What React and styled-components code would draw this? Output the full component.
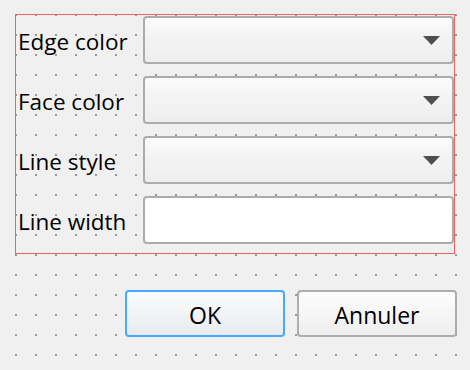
import React from "react";
import styled, { createGlobalStyle } from "styled-components";

const Global = createGlobalStyle`
  html, body { margin: 0; padding: 0; background: #f0f0f0; }
  body { font-family: "Open Sans", "Noto Sans", sans-serif; }
  * { box-sizing: border-box; }
`;

const Canvas = styled.div`
  width: 470px;
  height: 370px;
  padding: 14px 13px 0 15px;
  background-color: #f0f0f0;
  background-image: conic-gradient(at 2px 2px, transparent 270deg, #989898 270deg);
  background-size: 20px 20px;
  background-position: 15px 14px;
  display: flex;
  flex-direction: column;
`;

const FormBox = styled.div`
  width: 440px;
  height: 240px;
  border: 1px solid #f06262;
  padding: 1px 0 9px 0;
  display: grid;
  grid-template-columns: 127px 1fr;
  grid-auto-rows: 48px;
  row-gap: 12px;
`;

const Label = styled.div`
  display: flex;
  align-items: center;
  padding-left: 2px;
  padding-top: 2px;
  font-size: 22.5px;
  color: #000;
  white-space: nowrap;
`;

const Field = styled.div`
  border: 2px solid #acacac;
  border-radius: 4px;
  display: flex;
  align-items: center;
  justify-content: flex-end;
  padding-right: 12px;
  background: ${(p) =>
    p.$combo ? "linear-gradient(#fcfcfc, #f4f4f4 40%, #eeeeee)" : "#ffffff"};
`;

const Arrow = styled.svg`
  width: 17px;
  height: 9px;
  display: block;
  margin-top: 1px;
`;

const ButtonRow = styled.div`
  margin-top: 36px;
  display: flex;
  justify-content: flex-end;
  gap: 12px;
`;

const Button = styled.div`
  width: 160px;
  height: 47px;
  border: 2px solid ${(p) => (p.$focused ? "#47a9ff" : "#adadad")};
  border-radius: 4px;
  background: ${(p) =>
    p.$focused
      ? "linear-gradient(#fbfcfd, #e7ebef)"
      : "linear-gradient(#fdfdfd, #eeeeee)"};
  display: flex;
  align-items: center;
  justify-content: center;
  padding-top: 3px;
  font-size: 23px;
  color: #000;
`;

const ComboArrow = () => (
  <Arrow viewBox="0 0 17 9">
    <polygon points="0,0 17,0 8.5,9" fill="#4f4f4f" />
  </Arrow>
);

export default function App() {
  const rows = [
    { label: "Edge color", combo: true },
    { label: "Face color", combo: true },
    { label: "Line style", combo: true },
    { label: "Line width", combo: false },
  ];
  return (
    <>
      <Global />
      <Canvas>
        <FormBox>
          {rows.map((r) => (
            <React.Fragment key={r.label}>
              <Label>{r.label}</Label>
              <Field $combo={r.combo}>{r.combo && <ComboArrow />}</Field>
            </React.Fragment>
          ))}
        </FormBox>
        <ButtonRow>
          <Button $focused>OK</Button>
          <Button>Annuler</Button>
        </ButtonRow>
      </Canvas>
    </>
  );
}
